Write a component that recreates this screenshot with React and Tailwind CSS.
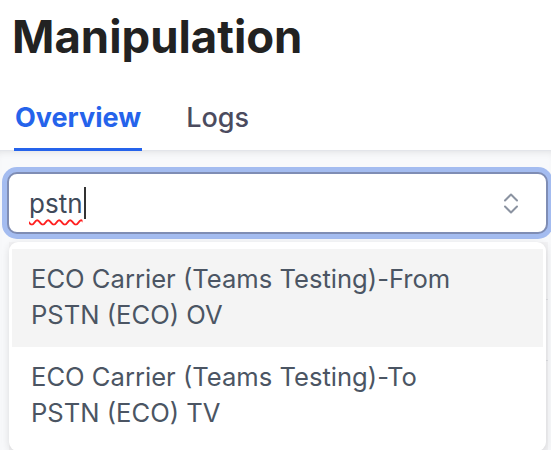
import React from "react";

function ChevronsUpDown() {
  return (
    <svg width="16" height="21" viewBox="0 0 16 21" fill="none" stroke="#8b93a1" strokeWidth="2" strokeLinecap="round" strokeLinejoin="round">
      <polyline points="2,7.5 8,1.5 14,7.5" />
      <polyline points="2,13.5 8,19.5 14,13.5" />
    </svg>
  );
}

export default function App() {
  return (
    <div className="w-[551px] h-[450px] overflow-hidden bg-white" style={{ fontFamily: "Inter, 'Noto Sans', sans-serif" }}>
      <div className="px-3 pt-[10px]">
        <h1 className="text-[45.5px] leading-[54px] font-bold text-[#222222]">Manipulation</h1>
      </div>
      <div className="mt-[37px] flex gap-[44px] px-[14px] border-b border-[#e3e5ea]">
        <div className="text-[27px] leading-[34px] font-bold text-[#2563eb] pb-[13px] px-[1px] border-b-[3px] border-[#2563eb] -mb-px">Overview</div>
        <div className="text-[27px] leading-[34px] font-medium text-[#4b4b5e] pb-[13px]">Logs</div>
      </div>
      <div className="relative h-[300px] bg-[#f8f9fb] shadow-[inset_0_6px_8px_-6px_rgba(0,0,0,0.12)] pt-[21px] pl-[7px] pr-[3px]">
        <div className="h-[62px] flex items-center justify-between rounded-[10px] border-2 border-[#7f8db4] bg-white shadow-[0_0_0_5px_#a4bcf0] pl-[20px] pr-[27px]">
          <div className="flex items-center">
            <span className="text-[26px] text-[#3f4a5a] underline decoration-wavy decoration-[#ff2020] decoration-[1.5px] underline-offset-[6px]">pstn</span>
            <span className="ml-px w-[2px] h-[32px] bg-[#333]"></span>
          </div>
          <ChevronsUpDown />
        </div>
        <div className="mt-[8px] ml-[2px] bg-[#f2f2f4] h-[220px]">
          <div className="h-[58px] border-b border-[#dedfe3]"></div>
          <div className="h-[61px] border-b border-[#dedfe3]"></div>
        </div>
        <div className="absolute left-[9px] top-[91px] w-[537px] bg-white rounded-[9px] shadow-[0_2px_8px_rgba(0,0,0,0.12)] pt-[7px] px-[3px] pb-[6px]">
          <div className="bg-[#f4f4f4] pl-[19px] pt-[12px] pb-[14px] text-[25.6px] leading-[36px] text-[#4b5563]">
            ECO Carrier (Teams Testing)-From<br />PSTN (ECO) OV
          </div>
          <div className="pl-[19px] pt-[12px] pb-[14px] text-[25.6px] leading-[36px] text-[#4b5563]">
            ECO Carrier (Teams Testing)-To<br />PSTN (ECO) TV
          </div>
        </div>
      </div>
    </div>
  );
}
